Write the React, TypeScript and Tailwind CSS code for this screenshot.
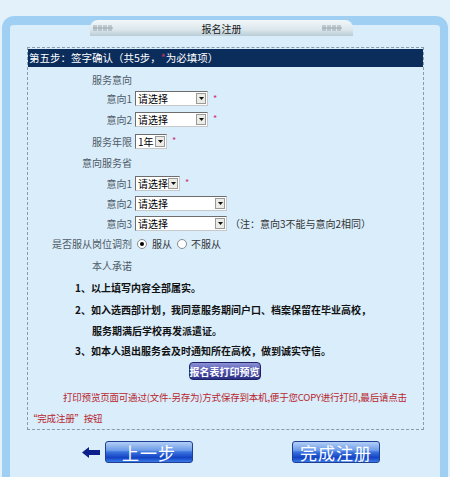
import React from 'react';

const cjk = { fontFamily: '"Noto Sans CJK SC", "Liberation Sans", sans-serif' };

function Star() {
  return <span className="ml-[5px] text-[9px] text-[#d0306a]">*</span>;
}

function Select({ value, w }: { value: string; w: string }) {
  return (
    <div className={`flex h-[15px] items-stretch border border-t-[#6d6d6d] border-l-[#6d6d6d] border-r-[#c8c8c8] border-b-[#c8c8c8] bg-white ${w}`}>
      <span className="flex-1 overflow-hidden whitespace-nowrap pl-[2px] text-[10px] leading-[13px] text-black">
        {value}
      </span>
      <span className="my-[1px] mr-[1px] flex w-[10px] items-center justify-center border border-[#9a9a9a] bg-[#ecebe6]">
        <svg width="5" height="3" viewBox="0 0 5 3">
          <path d="M0 0h5L2.5 3z" fill="#111" />
        </svg>
      </span>
    </div>
  );
}

function Radio({ checked }: { checked?: boolean }) {
  return (
    <span className="flex h-[10px] w-[10px] items-center justify-center rounded-full border border-[#8a8a8a] bg-white">
      {checked && <span className="h-[4px] w-[4px] rounded-full bg-black" />}
    </span>
  );
}

function Row({
  h,
  label,
  children,
}: {
  h: string;
  label: React.ReactNode;
  children?: React.ReactNode;
}) {
  return (
    <div className={`flex items-center ${h}`}>
      <span className="w-[104px] shrink-0 whitespace-nowrap text-right text-[10px] text-[#4f5a66]">{label}</span>
      <div className="ml-[3px] flex items-center">{children}</div>
    </div>
  );
}

function Marks() {
  return (
    <svg width="28" height="8" viewBox="0 0 28 8">
      {[0, 5, 10, 15].map((x) => (
        <g key={x} stroke="#9aa7ae" strokeWidth="1">
          <path d={`M${x + 1} 1v6M${x + 3} 1v6M${x} 4h5`} />
        </g>
      ))}
    </svg>
  );
}

function GlossButton({ children }: { children: React.ReactNode }) {
  return (
    <button className="flex h-[22px] w-[88px] items-center justify-center rounded-[3px] border border-[#1f3f96] bg-[linear-gradient(to_bottom,#b3cff5_0%,#6d9be9_42%,#3a73de_50%,#1343c4_78%,#3a7ae8_100%)] text-[17px] leading-none tracking-[1px] text-white">
      {children}
    </button>
  );
}

export default function App() {
  return (
    <div className="min-h-[477px] w-[450px] overflow-hidden bg-[#e3f1fb] pt-[16px]" style={cjk}>
      <div className="relative mx-[2px] h-[470px] rounded-t-[12px] border-x-[8px] border-t-[9px] border-[#9fd0f4] bg-[#d9edfb] pt-[22px]">
        {/* title tab */}
        <div className="absolute left-[80px] top-[-5px] flex h-[16px] w-[263px] items-center justify-between rounded-t-[8px] bg-[linear-gradient(to_bottom,#f2f7f9,#dbe7ec_60%,#b9ccd5)] px-[3px]">
          <Marks />
          <span className="text-[10px] text-[#222]">报名注册</span>
          <Marks />
        </div>

        <div className="ml-[17px] w-[397px] border border-dashed border-[#8b9aa8] pb-0 pt-[1px]">
          <div className="h-[18px] whitespace-nowrap bg-[#0b2d5b] pl-[1px] text-[10.5px] leading-[18px] text-white">
            第五步：签字确认（共5步，<span className="text-[#d0306a]">*</span>为必填项）
          </div>

          <div className="mt-[2px]">
            <Row h="h-[20px]" label="服务意向" />
            <Row h="h-[19px]" label="意向1">
              <Select value="请选择" w="w-[73px]" />
              <Star />
            </Row>
            <Row h="h-[22px]" label="意向2">
              <Select value="请选择" w="w-[73px]" />
              <Star />
            </Row>
            <Row h="h-[22px]" label="服务年限">
              <Select value="1年" w="w-[32px]" />
              <Star />
            </Row>
            <Row h="h-[21px]" label="意向服务省" />
            <Row h="h-[20px]" label="意向1">
              <Select value="请选择" w="w-[45px]" />
              <Star />
            </Row>
            <Row h="h-[20px]" label="意向2">
              <Select value="请选择" w="w-[92px]" />
            </Row>
            <Row h="h-[20px]" label="意向3">
              <Select value="请选择" w="w-[92px]" />
              <span className="ml-[3px] whitespace-nowrap text-[10px] text-[#333]">（注：意向3不能与意向2相同）</span>
            </Row>
            <Row h="h-[21px]" label="是否服从岗位调剂">
              <span className="ml-[2px]">
                <Radio checked />
              </span>
              <span className="ml-[5px] text-[10px] text-[#333]">服从</span>
              <span className="ml-[5px]">
                <Radio />
              </span>
              <span className="ml-[4px] text-[10px] text-[#333]">不服从</span>
            </Row>
            <Row h="h-[23px]" label="本人承诺" />
          </div>

          <div className="pl-[47px] text-[10px] font-bold text-[#111]">
            <div className="flex h-[21px] items-center">1、以上填写内容全部属实。</div>
            <div className="flex h-[22px] items-center whitespace-nowrap">
              2、如入选西部计划，我同意服务期间户口、档案保留在毕业高校，
            </div>
            <div className="flex h-[20px] items-center pl-[17px]">服务期满后学校再发派遣证。</div>
            <div className="flex h-[20px] items-center">3、如本人退出服务会及时通知所在高校，做到诚实守信。</div>
          </div>

          <div className="mt-[2px] flex justify-center pr-[2px]">
            <button className="flex h-[18px] w-[72px] items-center justify-center rounded-[4px] border border-[#1e2266] bg-[linear-gradient(to_bottom,#8d92d8,#4d52a8_55%,#2b2f86)] text-[10px] font-bold text-white">
              报名表打印预览
            </button>
          </div>

          <p className="mt-[7px] whitespace-nowrap text-[9.5px] leading-[21px] tracking-[-0.2px] text-[#b8262e]">
            <span className="pl-[35px]">
              打印预览页面可通过(文件-另存为)方式保存到本机,便于您COPY进行打印,最后请点击
            </span>
            <br />
            “完成注册”按钮
          </p>
        </div>

        <div className="mt-[11px] flex items-center">
          <svg className="ml-[72px]" width="18" height="11" viewBox="0 0 18 11">
            <path d="M0 5.5L7 0v3h11v5H7v3z" fill="#0c1f8c" />
          </svg>
          <div className="ml-[5px]">
            <GlossButton>上一步</GlossButton>
          </div>
          <div className="ml-[99px]">
            <GlossButton>完成注册</GlossButton>
          </div>
        </div>
      </div>
    </div>
  );
}
